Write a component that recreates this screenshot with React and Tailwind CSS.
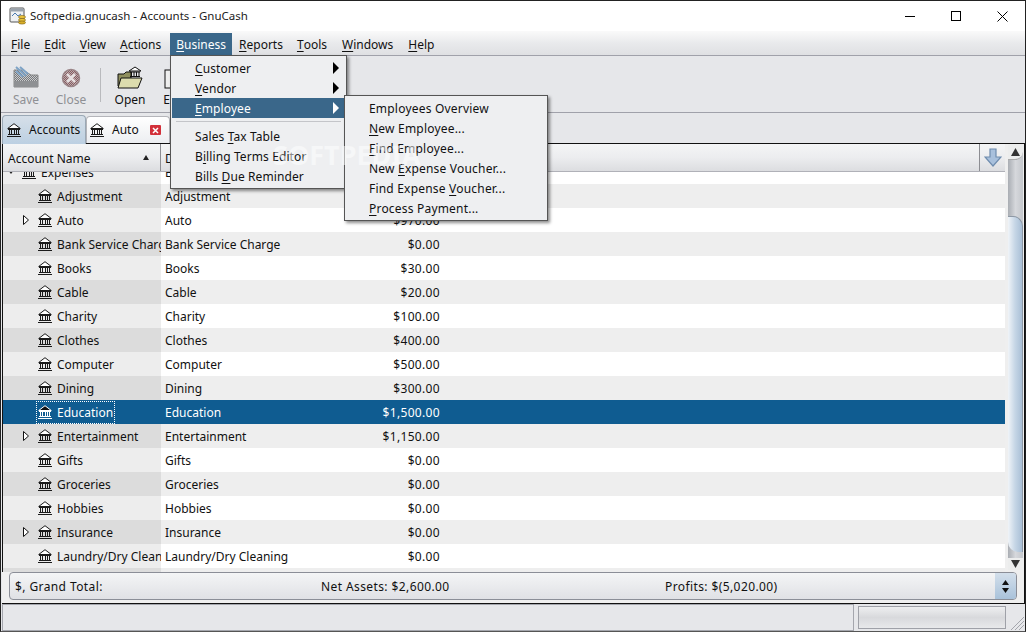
import React from "react";

const font = { fontFamily: '"Noto Sans", sans-serif' };

function Bank({ className = "", sel = false }) {
  const color = sel ? "#ffffff" : "#1a1a1a";
  return (
    <svg width="14" height="14" viewBox="0 0 14 14" className={`shrink-0 ${className}`} fill="none">
      <path d="M7 0.7 L13.3 5.5 L0.7 5.5 Z" fill={sel ? "#111" : "#fff"} stroke={color} strokeWidth="1" />
      <g shapeRendering="crispEdges">
        <path d="M1 6.5H13" stroke={color} />
        <path d="M2.5 7V11M4.5 7V11M7.5 7V11M9.5 7V11M11.5 7V11" stroke={color} />
        <path d="M1 11.5H13M0 13.5H14" stroke={color} />
      </g>
    </svg>
  );
}

function U({ t, i }) {
  if (i === undefined || i < 0) return <>{t}</>;
  return (
    <>
      {t.slice(0, i)}
      <u className="underline underline-offset-[2px]">{t[i]}</u>
      {t.slice(i + 1)}
    </>
  );
}

const menus = [
  ["File", 0, "px-[7px]"],
  ["Edit", 0, "px-[7px]"],
  ["View", 0, "px-[7px]"],
  ["Actions", 0, "px-[7px]"],
  ["Business", 0, "ml-[2px] pl-[6px] pr-[6px] bg-[#3a678a] text-white"],
  ["Reports", 0, "px-[7px]"],
  ["Tools", 0, "px-[7px]"],
  ["Windows", 0, "ml-[1px] px-[7px]"],
  ["Help", 0, "ml-[1px] px-[7px]"],
];

const rows = [
  ["Expenses", "Expenses", "", false, true],
  ["Adjustment", "Adjustment", "", false],
  ["Auto", "Auto", "$970.00", true],
  ["Bank Service Charge", "Bank Service Charge", "$0.00", false],
  ["Books", "Books", "$30.00", false],
  ["Cable", "Cable", "$20.00", false],
  ["Charity", "Charity", "$100.00", false],
  ["Clothes", "Clothes", "$400.00", false],
  ["Computer", "Computer", "$500.00", false],
  ["Dining", "Dining", "$300.00", false],
  ["Education", "Education", "$1,500.00", false],
  ["Entertainment", "Entertainment", "$1,150.00", true],
  ["Gifts", "Gifts", "$0.00", false],
  ["Groceries", "Groceries", "$0.00", false],
  ["Hobbies", "Hobbies", "$0.00", false],
  ["Insurance", "Insurance", "$0.00", true],
  ["Laundry/Dry Cleaning", "Laundry/Dry Cleaning", "$0.00", false],
  ["Lawn", "", "", false],
];

function Row({ r, idx }) {
  const [name, desc, amt, arrow, top] = r;
  const sel = name === "Education";
  const odd = idx % 2 === 1;
  const c1 = sel ? "bg-[#0f5c91] text-white" : odd ? "bg-[#dcdcdc]" : "bg-[#ededed]";
  const c2 = sel ? "bg-[#0f5c91] text-white" : odd ? "bg-[#eeeeee]" : "bg-white";
  return (
    <div className={`flex h-6 items-center ${c2}`}>
      <div className={`flex h-6 w-[158px] shrink-0 items-center overflow-hidden whitespace-nowrap ${c1} ${top ? "pl-[2px]" : "pl-[18px]"}`}>
        <div className="flex w-[16px] shrink-0 items-center pl-[1px]">
          {arrow && (
            <svg width="8" height="12" viewBox="0 0 8 12" fill="none">
              <path d="M1.5 1.5 L6.5 6 L1.5 10.5 Z" stroke="#111" fill="#fff" />
            </svg>
          )}
          {top && (
            <svg width="8" height="8" viewBox="0 0 8 8" className="ml-[1px]">
              <path d="M1 2 L4 6 L7 2 Z" fill="#222" />
            </svg>
          )}
        </div>
        {sel ? (
          <div className="ml-[-1px] flex h-[23px] items-center border border-dotted border-white pl-[1px] pr-[1px]">
            <Bank sel />
            <span className="ml-[5px] pt-[2px]">{name}</span>
          </div>
        ) : (
          <>
            <Bank className="ml-[1px] mr-[5px]" />
            <span className="pt-[2px]">{name}</span>
          </>
        )}
      </div>
      <div className="flex w-[279px] shrink-0 items-center pl-[4px]">
        <span className="flex-1 overflow-hidden whitespace-nowrap pt-[2px] leading-[18px]">{desc}</span>
        <span className="whitespace-nowrap pt-[2px] text-right tracking-[0.33px]">{amt}</span>
      </div>
    </div>
  );
}

function MenuItem({ t, i, hi, arrow, sub }) {
  return (
    <div className={`flex h-5 items-center justify-between pr-[5px] ${sub ? "pl-[24px] tracking-[0.2px]" : "pl-[23px] tracking-[0.1px]"} ${hi ? "bg-[#3a678a] text-white" : ""}`}>
      <span className="pt-[2px]"><U t={t} i={i} /></span>
      {arrow && (
        <svg width="8" height="12" viewBox="0 0 8 12">
          <path d="M1 0 L7 6 L1 12 Z" fill={hi ? "#fff" : "#000"} />
        </svg>
      )}
    </div>
  );
}

function ToolButton({ label, dim, children, className = "" }) {
  return (
    <div className={`flex flex-col items-center ${className}`}>
      <div className="flex h-[33px] items-center justify-center">{children}</div>
      <span className={dim ? "text-[#8f9094]" : "text-[#111]"}>{label}</span>
    </div>
  );
}

export default function App() {
  return (
    <div className="relative flex h-[632px] w-[1026px] flex-col overflow-hidden border border-[#222] border-b-[#555] bg-[#e6e7ea] text-[12px] leading-none text-[#111]" style={font}>
      {/* Title bar */}
      <div className="flex h-[30px] shrink-0 items-center bg-white pl-[8px]">
        <svg width="18" height="18" viewBox="0 0 18 18" className="mr-[3px]">
          <rect x="1" y="1" width="14" height="14" rx="1" fill="#eef0f2" stroke="#555" />
          <rect x="1.5" y="1.5" width="13" height="3" fill="#9aa3ad" />
          <path d="M3 9 L6 6 L9 9 L12 7" stroke="#4a7ab0" fill="none" />
          <ellipse cx="13" cy="10" rx="3.5" ry="1.6" fill="#e9c23c" stroke="#7a6010" strokeWidth="0.6" />
          <ellipse cx="13" cy="13" rx="3.5" ry="1.6" fill="#e9c23c" stroke="#7a6010" strokeWidth="0.6" />
          <ellipse cx="13" cy="15.5" rx="3.5" ry="1.6" fill="#d9ae2a" stroke="#7a6010" strokeWidth="0.6" />
        </svg>
        <span className="text-[11.5px] text-[#222]">Softpedia.gnucash - Accounts - GnuCash</span>
        <div className="ml-auto flex items-center">
          <div className="flex h-[30px] w-[46px] items-center justify-center">
            <div className="h-px w-[10px] bg-black" />
          </div>
          <div className="flex h-[30px] w-[46px] items-center justify-center">
            <div className="h-[10px] w-[10px] border border-black" />
          </div>
          <div className="flex h-[30px] w-[46px] items-center justify-center">
            <svg width="11" height="11" viewBox="0 0 11 11"><path d="M0.5 0.5 L10.5 10.5 M10.5 0.5 L0.5 10.5" stroke="#000" /></svg>
          </div>
        </div>
      </div>

      {/* Menu bar */}
      <div className="flex h-[25px] shrink-0 items-stretch border-b border-[#a0a1aa] bg-gradient-to-b from-[#fafafa] via-[#e9eaec] to-[#dfe0e3] pl-[3px] pt-[2px]">
        {menus.map(([t, i, cls]) => (
          <div key={t} className={`flex items-center pt-[2px] ${cls}`}>
            <U t={t} i={i} />
          </div>
        ))}
      </div>

      {/* Toolbar */}
      <div className="flex h-[57px] shrink-0 items-start border-b border-[#a0a1aa] bg-[#e6e7ea] pt-[5px] pl-[7px]">
        <ToolButton label="Save" dim className="w-[36px]">
          <svg width="26" height="24" viewBox="0 0 26 24">
            <defs>
              <pattern id="dith" width="2" height="2" patternUnits="userSpaceOnUse">
                <rect width="2" height="2" fill="#c9cacc" />
                <rect width="1" height="1" fill="#77797c" />
                <rect x="1" y="1" width="1" height="1" fill="#77797c" />
              </pattern>
              <pattern id="dithr" width="2" height="2" patternUnits="userSpaceOnUse">
                <rect width="2" height="2" fill="#b9aeb0" />
                <rect width="1" height="1" fill="#8a5a5e" />
                <rect x="1" y="1" width="1" height="1" fill="#8a5a5e" />
              </pattern>
            </defs>
            <path d="M1 4 L10 4 L18 9 L25 9 L25 21 L1 21 Z" fill="url(#dith)" stroke="#888" />
            <path d="M1 15 H25 V21 H1 Z" fill="#8e9093" />
            <path d="M3 1 L13 10 M7 1 L15 8 M3 5 L10 11" stroke="#7ea3c6" strokeWidth="2" />
          </svg>
        </ToolButton>
        <ToolButton label="Close" dim className="ml-[9px] w-[36px]">
          <svg width="20" height="20" viewBox="0 0 20 20">
            <circle cx="10" cy="10" r="8.5" fill="url(#dithr)" stroke="#9a8588" strokeWidth="1.5" />
            <path d="M6 6 L14 14 M14 6 L6 14" stroke="#e6dfe0" strokeWidth="2.5" />
          </svg>
        </ToolButton>
        <div className="ml-[11px] mt-[7px] h-[34px] w-px bg-[#b9babd]" />
        <ToolButton label="Open" className="ml-[11px] w-[36px]">
          <svg width="26" height="24" viewBox="0 0 26 24">
            <path d="M1 8 H7 L9 6 H14 V20 H1 Z" fill="#8f8f5e" stroke="#111" />
            <path d="M4 12 H25 L21 22 H1 Z" fill="#dcdcae" stroke="#111" />
            <path d="M18 1 L24 5 H12 Z" fill="#fff" stroke="#111" />
            <path d="M13 6 H23 M14.5 6 V10 M17 6 V10 M19.5 6 V10 M22 6 V10 M13 10.5 H23" stroke="#111" />
          </svg>
        </ToolButton>
        <ToolButton label="Edit" className="ml-[8px] w-[36px]">
          <svg width="26" height="24" viewBox="0 0 26 24">
            <rect x="4" y="4" width="16" height="18" fill="#eee" stroke="#111" />
          </svg>
        </ToolButton>
      </div>

      {/* Tabs */}
      <div className="flex h-[30px] shrink-0 items-end pl-[1px]">
        <div className="relative z-10 -mb-px flex h-[29px] w-[84px] items-center rounded-t-[4px] border border-b-0 border-[#9aa8b5] bg-gradient-to-b from-[#d6dfe8] to-[#bcd0e2] pl-[4px]">
          <Bank />
          <span className="ml-[8px]">Accounts</span>
        </div>
        <div className="flex h-[27px] w-[84px] items-center rounded-t-[4px] border border-b-0 border-[#b4b5ba] bg-gradient-to-b from-white to-[#eceef1] pl-[3px]">
          <Bank />
          <span className="ml-[8px]">Auto</span>
          <div className="ml-[11px] flex h-[10px] w-[11px] items-center justify-center rounded-[1px] bg-[#d2303a]">
            <svg width="7" height="7" viewBox="0 0 7 7"><path d="M1 1 L6 6 M6 1 L1 6" stroke="#fff" strokeWidth="1.5" /></svg>
          </div>
        </div>
      </div>

      {/* Main notebook page */}
      <div className="ml-px flex min-h-0 flex-1 flex-col border-y border-r border-[#111] bg-[#efefef]">
        <div className="flex min-h-0 flex-1">
          <div className="flex min-w-0 flex-1 flex-col border-l border-[#111]">
            {/* header */}
            <div className="flex h-[28px] shrink-0 items-stretch border-b border-[#b0b1b8] bg-gradient-to-b from-[#f4f5f6] via-[#ecedef] to-[#dcdde0]">
              <div className="flex w-[158px] items-center justify-between border-r border-[#8c8d92] pl-[5px] pr-[11px]">
                <span className="pt-[2px]">Account Name</span>
                <svg width="6" height="5" viewBox="0 0 6 5"><path d="M3 0 L6 5 H0 Z" fill="#222" /></svg>
              </div>
              <div className="flex flex-1 items-center pl-[4px] pt-[2px]">Description</div>
              <div className="flex w-[26px] items-center justify-center border-l border-[#8c8d92]">
                <svg width="18" height="19" viewBox="0 0 18 19">
                  <path d="M6 1 H12 V9 H17 L9 18 L1 9 H6 Z" fill="#a8c0dc" stroke="#6e8cae" strokeWidth="1.2" />
                </svg>
              </div>
            </div>
            {/* rows */}
            <div className="min-h-0 flex-1 overflow-hidden bg-white">
              <div className="mt-[-12px]">
                {rows.map((r, idx) => (
                  <Row key={r[0]} r={r} idx={idx} />
                ))}
              </div>
            </div>
          </div>
          {/* scrollbar */}
          <div className="ml-[3px] mr-px flex w-[15px] shrink-0 flex-col items-center bg-gradient-to-r from-[#a9adb3] via-[#d6d8dc] to-[#c4c7cc]">
            <div className="flex h-[16px] w-full shrink-0 items-center justify-center rounded-br-[8px] border-b border-[#aaa] bg-[#eceded]">
              <svg width="9" height="8" viewBox="0 0 9 8"><path d="M4.5 0 L9 8 H0 Z" fill="#333" /></svg>
            </div>
            <div className="mt-[56px] w-full flex-1 rounded-tr-[10px] rounded-bl-[10px] border-r border-t border-[#8d98a5] bg-gradient-to-r from-[#f0f4f8] via-[#c6d6e6] to-[#a9bfd6]" />
            <div className="h-[6px] shrink-0" />
            <div className="flex h-[12px] w-full shrink-0 items-center justify-center bg-[#eceded]">
              <svg width="9" height="8" viewBox="0 0 9 8"><path d="M4.5 8 L9 0 H0 Z" fill="#333" /></svg>
            </div>
            <div className="h-[2px] w-full shrink-0 bg-[#efefef]" />
          </div>
        </div>
        {/* summary */}
        <div className="mx-[7px] mb-[3px] flex h-[28px] shrink-0 items-stretch rounded-[4px] border border-[#8b8e97] bg-gradient-to-b from-[#f4f5f6] to-[#e0e1e5] pl-[5px] tracking-[0.4px]">
          <div className="flex w-[306px] items-center pt-[2px]">$, Grand Total:</div>
          <div className="flex w-[344px] items-center pt-[2px]">Net Assets: $2,600.00</div>
          <div className="flex flex-1 items-center pt-[2px]">Profits: $(5,020.00)</div>
          <div className="flex w-[21px] flex-col items-center justify-center gap-[3px] rounded-r-[3px] bg-gradient-to-b from-[#d3dfeb] to-[#a9c2da]">
            <svg width="7" height="5" viewBox="0 0 7 5"><path d="M3.5 0 L7 5 H0 Z" fill="#111" /></svg>
            <svg width="7" height="5" viewBox="0 0 7 5"><path d="M3.5 5 L7 0 H0 Z" fill="#111" /></svg>
          </div>
        </div>
      </div>

      {/* Status bar */}
      <div className="flex h-[27px] shrink-0 items-stretch bg-[#e6e7ea] pl-px">
        <div className="w-[852px] border border-[#a4a6ad]" />
        <div className="my-[2px] ml-[4px] w-[148px] border border-[#9fa1a8] bg-gradient-to-b from-[#eeeff0] via-[#d8d9dc] to-[#e8e9eb]" />
        <div className="flex flex-1 items-end justify-end">
          <svg width="16" height="16" viewBox="0 0 16 16">
            <path d="M15 2 L2 15 M15 6 L6 15 M15 10 L10 15" stroke="#a4a6ad" />
          </svg>
        </div>
      </div>

      {/* Business dropdown */}
      <div className="absolute left-[169px] top-[54px] w-[177px] border border-[#555] bg-[#eeeff1] px-px py-[2px] shadow-[2px_2px_3px_rgba(0,0,0,0.45)]">
        <MenuItem t="Customer" i={0} arrow />
        <MenuItem t="Vendor" i={0} arrow />
        <MenuItem t="Employee" i={0} arrow hi />
        <div className="mx-[4px] mb-[4px] mt-[3px] h-px bg-[#c4c5c9]" />
        <MenuItem t="Sales Tax Table" i={6} />
        <MenuItem t="Billing Terms Editor" i={1} />
        <MenuItem t="Bills Due Reminder" i={6} />
      </div>

      {/* Employee submenu */}
      <div className="absolute left-[343px] top-[94px] w-[204px] border border-[#555] bg-[#eeeff1] py-[2px] shadow-[2px_2px_3px_rgba(0,0,0,0.45)]">
        <MenuItem sub t="Employees Overview" />
        <MenuItem sub t="New Employee..." i={0} />
        <MenuItem sub t="Find Employee..." i={0} />
        <MenuItem sub t="New Expense Voucher..." i={4} />
        <MenuItem sub t="Find Expense Voucher..." i={13} />
        <MenuItem sub t="Process Payment..." i={0} />
      </div>

      {/* Watermark */}
      <div className="pointer-events-none absolute left-[272px] top-[140px] text-[27px] font-bold leading-none text-white/50">
        SOFTPEDIA
      </div>
    </div>
  );
}
